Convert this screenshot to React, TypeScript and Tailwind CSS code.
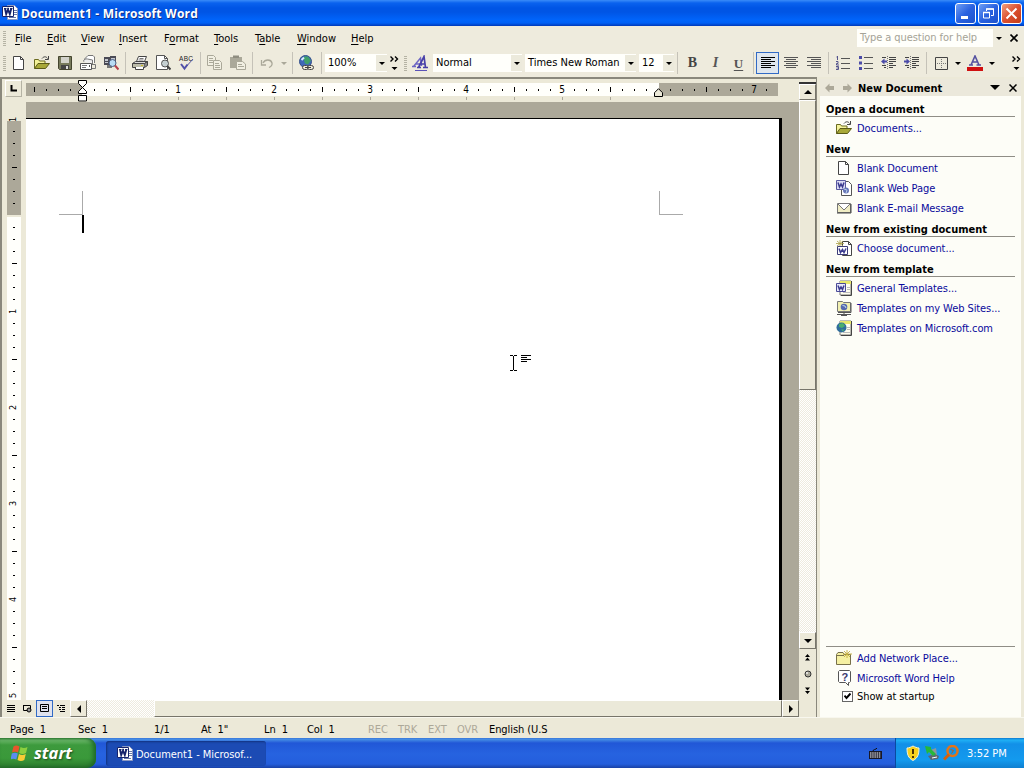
import type { ReactNode } from "react";
import clsx from "clsx";

const UI = "font-['DejaVu_Sans_Condensed','DejaVu_Sans',sans-serif] text-[11px]";

function Svg({ w = 16, h = 16, children }: { w?: number; h?: number; children: ReactNode }) {
  return (
    <svg width={w} height={h} viewBox={`0 0 ${w} ${h}`} fill="none" className="shrink-0">
      {children}
    </svg>
  );
}

function WordIcon() {
  return (
    <Svg>
      <path d="M5.500 .5h7l3 3v11h-10z" fill="#fff" stroke="#8c98c0" />
      <path d="M12 5.500h3M12 7.500h3M12 9.500h3M7 12.500h7" stroke="#6878a8" />
      <path d="M.5 1.500h11v10h-11z" fill="#fff" stroke="#16246c" />
      <path d="M2 3.500h2.500M5.500 3.500H7M8 3.500h2.500" stroke="#16246c" />
      <path d="M3 3.500l1.200 5.500L6 4.500 7.800 9 9.300 3.500" stroke="#16246c" strokeWidth="1.900" />
    </Svg>
  );
}

const NewDoc = () => (
  <Svg>
    <path d="M2.500 1.500h7l3 3v10h-10z" fill="#fff" stroke="#444" />
    <path d="M9.500 1.500v3h3" stroke="#444" />
  </Svg>
);

const OpenFolder = () => (
  <Svg>
    <path d="M.5 13.500v-9h4l1 1.500h5.500v3" fill="#f4f29a" stroke="#6b6b20" />
    <path d="M.5 13.500L4 8.500h11.500l-4 5z" fill="#a8a838" stroke="#5a5a18" />
    <path d="M8 3.500c2-2.500 4.500-2 5.500 0M14.500 1v3.500H11" stroke="#444" />
  </Svg>
);

const Save = () => (
  <Svg>
    <path d="M1.500 1.500h13v13h-12l-1-1z" fill="#777a5c" stroke="#44452f" />
    <path d="M4 2h8v6H4z" fill="#d2d2ca" />
    <path d="M4 10h8v4H4z" fill="#444" />
    <path d="M9 11h2v3H9z" fill="#ddd" />
  </Svg>
);

const Mail = () => (
  <Svg>
    <path d="M4.500 7V4L8 .5h5l1.500 1.500v6" fill="#fff" stroke="#777" />
    <path d="M3.500 6.500c0-2 2-3 4-2.500l5 1v4" fill="#eee" stroke="#777" />
    <path d="M.5 8.500h11v6H.5z" fill="#fff" stroke="#555" />
    <path d="M2 10.500h5M2 12.500h4" stroke="#777" />
    <path d="M9 10h1v2H9z" fill="#555" />
    <path d="M12 9.500h3.500v4H12" stroke="#777" />
  </Svg>
);

const Search = () => (
  <Svg>
    <path d="M1 2h6v8H1zM7 1h6v7H7z" fill="#4b4b55" />
    <path d="M2 4h3v2H2zM8 3h4v4H8zM2 7h3v1H2z" fill="#c4c8d0" />
    <path d="M4 10h5v3H4z" fill="#777" />
    <circle cx="9.500" cy="8" r="3.500" fill="#b9dcf5" stroke="#4a5c80" />
    <path d="M12 10.500l3.500 4" stroke="#b5404a" strokeWidth="2" />
  </Svg>
);

const Print = () => (
  <Svg>
    <path d="M4.500 6.500l2-5h8l-2 5" fill="#fff" stroke="#444" />
    <path d="M7.500 3.500h4M6.500 5h5" stroke="#777" />
    <path d="M.5 8.500l3-2h12l-3 2z" fill="#ddd" stroke="#444" />
    <path d="M.5 8.500h12v4H.5z" fill="#bcbcaa" stroke="#444" />
    <path d="M12.500 8.500l3-2v4l-3 2" fill="#888" stroke="#444" />
    <path d="M3.500 12v2.500h8V12" fill="#fff" stroke="#444" />
    <path d="M9 10.500h2" stroke="#c8b820" />
  </Svg>
);

const Preview = () => (
  <Svg>
    <path d="M1.500 .5h8l3 3v11h-11z" fill="#fff" stroke="#555" />
    <path d="M9.500 .5v3h3" stroke="#555" />
    <circle cx="10" cy="8.500" r="3.500" fill="#c5d0d2" stroke="#555" />
    <path d="M12.200 11l3.300 3.500" stroke="#444" strokeWidth="2" />
  </Svg>
);

const Spell = () => (
  <Svg>
    <text x="1" y="5.500" fontSize="6.500" fontFamily="Liberation Sans" fill="#222" letterSpacing=".3">
      ABC
    </text>
    <path d="M6.500 13.500L15 4" stroke="#5555a0" />
    <path d="M3 9l3.500 4.500 3-4" stroke="#5050a8" strokeWidth="2" />
  </Svg>
);

const Copy = () => (
  <Svg>
    <path d="M.5 .5h6l2 2v8h-8z" stroke="#aaa899" fill="#f1efe2" />
    <path d="M6.500 5.500h6l2 2v7h-8z" stroke="#aaa899" fill="#f1efe2" />
    <path d="M2 3.500h4M2 5.500h4M2 7.500h4M8 8.500h4M8 10.500h5M8 12.500h5" stroke="#aaa899" />
  </Svg>
);

const Paste = () => (
  <Svg>
    <path d="M0 2h12v11H0z" fill="#aaa899" />
    <path d="M3 .5h6v2.500H3z" fill="#8f8d80" />
    <path d="M6.500 6.500h6l3 2.500v5.500h-9z" stroke="#aaa899" fill="#f1efe2" />
    <path d="M8 9.500h4M8 11.500h6" stroke="#aaa899" />
  </Svg>
);

const Undo = () => (
  <Svg>
    <path d="M4 8c2-4 8-4 9 0 .5 2-1 3.500-3 4.500" stroke="#aaa899" strokeWidth="1.300" />
    <path d="M2.500 5v5h4.500" stroke="#aaa899" strokeWidth="1.300" />
  </Svg>
);

const Link = () => (
  <Svg w={17}>
    <circle cx="7.500" cy="6.500" r="6" fill="#3e68b8" stroke="#34508a" />
    <path d="M6 1.500l4 0 3 4-3 4-3-1-1-3z" fill="#3fa06a" />
    <path d="M3.500 5l2.500-2.500" stroke="#d7ecff" strokeWidth="2" />
    <rect x="4.500" y="10.500" width="6" height="4" rx="2" fill="#ece9d8" stroke="#444" />
    <rect x="9.500" y="10.500" width="6" height="4" rx="2" fill="#ece9d8" stroke="#444" />
    <path d="M7 12.500h6" stroke="#444" />
  </Svg>
);

const Styles = () => (
  <Svg>
    <path d="M0 11.500h4M1.500 11.500L8.500 3l1 8M4 9h4.500" stroke="#6d66c4" strokeWidth="1.500" />
    <path d="M5 12.500h4M6.500 12.500L12 1.500l1.500 11M8.500 9H13M11 12.500h5" stroke="#4840a8" strokeWidth="1.700" />
    <path d="M3 15.500h12" stroke="#5a52b8" />
  </Svg>
);

const lineSets = {
  left: "M1 2.500h14M1 4.500h10M1 6.500h14M1 8.500h10M1 10.500h14M1 12.500h10",
  center: "M1 2.500h14M3 4.500h10M1 6.500h14M3 8.500h10M1 10.500h14M3 12.500h10",
  right: "M1 2.500h14M5 4.500h10M1 6.500h14M5 8.500h10M1 10.500h14M5 12.500h10",
};

const Align = ({ kind, color = "#555" }: { kind: keyof typeof lineSets; color?: string }) => (
  <Svg>
    <path d={lineSets[kind]} stroke={color} />
  </Svg>
);

const Numbering = () => (
  <Svg>
    <path d="M2.500 1v4M1.500 2h1M1 6.500h2v2H1.500v1.500H4M1 11.500h2.500v3H1M1.500 13h2" stroke="#55558c" />
    <path d="M6 3.500h9M6 8.500h9M6 13.500h9" stroke="#555" />
  </Svg>
);

const Bullets = () => (
  <Svg>
    <path d="M1 1h3v3H1zM1 6.500h3v3H1zM1 12h3v3H1z" fill="#4b4ba8" />
    <path d="M6 2.500h9M6 8.500h9M6 13.500h9" stroke="#555" />
  </Svg>
);

const Indent = ({ out }: { out?: boolean }) => (
  <Svg>
    <path d="M1 2.500h4M8 2.500h7M8 4.500h7M8 6.500h7M8 8.500h4M1 10.500h4M8 10.500h7M3 12.500h2M8 12.500h4" stroke="#444" />
    <path d="M6.500 1v13" stroke="#777" strokeDasharray="1 1" />
    {out ? (
      <path d="M0 6.500l3.500-3v2H6v2H3.500v2z" fill="#4b4ba8" />
    ) : (
      <path d="M6 6.500l-3.500-3v2H0v2h2.500v2z" fill="#4b4ba8" />
    )}
  </Svg>
);

const Borders = () => (
  <Svg>
    <path d="M2.500 2.500h12v12h-12z" stroke="#444" />
    <path d="M8.500 4v10M4 8.500h10" stroke="#777" strokeDasharray="1 1" />
  </Svg>
);

const FontColor = () => (
  <Svg>
    <path d="M2 10h4M4 10L8 1l4 9M5 7h6M9.500 10H14" stroke="#5552a0" strokeWidth="1.600" />
    <path d="M0 12h16v4H0z" fill="#d01010" />
  </Svg>
);

const WebPage = () => (
  <Svg>
    <path d="M5.500 1.500h7l3 3v11h-10z" fill="#fff" stroke="#555" />
    <path d="M.5.5h9v9h-9z" fill="#dcdcf4" stroke="#5a5aa0" />
    <path d="M2 2.500l1.500 4.500L5 4l1.500 3L8 2.500" stroke="#3c3c90" strokeWidth="1.500" />
    <circle cx="10" cy="10.500" r="3" fill="#6676b8" />
    <path d="M8 9l3 1-1 3" stroke="#b6cde4" />
  </Svg>
);

const Envelope = () => (
  <Svg>
    <path d="M1.500 3.500h13v9h-13z" fill="#f0edc4" stroke="#777" />
    <path d="M2 4l6 6 6-6" fill="#fff" stroke="#777" />
    <path d="M1 13h14V4" stroke="#444" />
  </Svg>
);

const ChooseDoc = () => (
  <Svg>
    <path d="M6.500 1.500h6l3 3v11h-9z" fill="#fff" stroke="#444" />
    <path d="M12.500 1.500v3h3" stroke="#444" />
    <path d="M1.500 6.500h10v8h-10z" fill="#fff" stroke="#3c3c78" />
    <path d="M3 8.500l1.500 4L6.500 9.500 8 12.500 10 8.500" stroke="#3c3c90" strokeWidth="1.500" />
    <path d="M0 3.500h8M4 0v6M1 1l6 5M7 1L1 6" stroke="#a99f44" strokeWidth=".8" />
  </Svg>
);

const Template = ({ globe }: { globe?: boolean }) => (
  <Svg>
    <path d="M4 1h11v14H4z" fill="#fffef0" stroke="#777" />
    <path d="M4 1h11v3H4z" fill="#e8e86c" />
    <path d="M15.500 1v14.500H5" stroke="#444" />
    <path d="M11 7.500h3M11 9.500h3M7 12.500h7" stroke="#bbb" />
    {globe ? (
      <>
        <circle cx="5.500" cy="7.500" r="5" fill="#2f6d9c" />
        <path d="M3 4l4-1 2 3-3 2-3-1zM5 9.500h3l-1 2z" fill="#4cae6c" />
      </>
    ) : (
      <>
        <path d="M.5 3.500h9v8h-9z" fill="#e9e9fa" stroke="#4a4a98" />
        <path d="M2 5.500l1.500 4L5 7l1.500 2.500L8 5.500" stroke="#3c3c90" strokeWidth="1.500" />
      </>
    )}
  </Svg>
);

const WebFolder = () => (
  <Svg>
    <path d="M1.500 1.500h5l1 1h7v9h-13z" fill="#f1f0b0" stroke="#777" />
    <path d="M15 3v9.500H2" stroke="#555" />
    <circle cx="8" cy="7" r="3.300" fill="#5668b0" />
    <path d="M6.500 5.500l2.500.5 1 2" stroke="#c5dfe8" />
    <path d="M8 12v2M1 14.500h14M5 15.500h6" stroke="#555" />
  </Svg>
);

const NetFolder = () => (
  <Svg>
    <path d="M.5 14.500v-10l1.500-2h5l1 2h6.500v10z" fill="#f5f0a2" stroke="#77704a" />
    <path d="M1 5.500h7" stroke="#77704a" />
    <path d="M11 0v8M7 4h9M8 1l6 6M14 1L8 7" stroke="#c4ae3c" strokeWidth=".9" />
  </Svg>
);

const HelpIcon = () => (
  <Svg>
    <path d="M3.500.5h10l1 1v10l-1 1h-1v3l-3-3h-6l-1-1v-10z" fill="#fff" stroke="#555" />
    <text x="5.500" y="10.500" fontSize="11" fontWeight="bold" fontFamily="Liberation Sans" fill="#3a3a70">
      ?
    </text>
  </Svg>
);

/* ---------- small chrome parts ---------- */

function Arrow({ dir = "down", size = 3, color = "#000" }: { dir?: "down" | "up" | "left" | "right"; size?: number; color?: string }) {
  const s = size;
  const d = {
    down: `M0 0h${2 * s}L${s} ${s}z`,
    up: `M0 ${s}h${2 * s}L${s} 0z`,
    left: `M${s} 0v${2 * s}L0 ${s}z`,
    right: `M0 0v${2 * s}L${s} ${s}z`,
  }[dir];
  const flat = dir === "down" || dir === "up";
  return (
    <Svg w={flat ? 2 * s : s} h={flat ? s : 2 * s}>
      <path d={d} fill={color} />
    </Svg>
  );
}

const Sep = ({ wide }: { wide?: boolean }) => (
  <div className={clsx("flex h-[22px] shrink-0 justify-center", wide ? "w-[7px]" : "w-[6px]")}>
    <div className="w-px bg-[#c5c2b8]" />
  </div>
);

const Grip = ({ className }: { className: string }) => (
  <div
    className={clsx(
      "h-[15px] w-[3px] shrink-0 bg-[repeating-linear-gradient(to_bottom,#b5b3a4_0,#b5b3a4_1px,transparent_1px,transparent_2px)]",
      className,
    )}
  />
);

const Tool = ({ children, active }: { children: ReactNode; active?: boolean }) => (
  <button
    className={clsx(
      "flex h-[22px] w-[23px] shrink-0 items-center justify-center",
      active && "border border-[#316ac5] bg-[#dfe6ee]",
    )}
  >
    {children}
  </button>
);

const Drop = ({ color }: { color?: string }) => (
  <div className="flex w-[11px] shrink-0 justify-center">
    <Arrow color={color} />
  </div>
);

function Combo({ value, className }: { value: string; className: string }) {
  return (
    <div className={clsx("flex h-[18px] shrink-0 items-center bg-[#fffffb] pl-[3px]", className)}>
      <span className="flex-1 pb-px whitespace-nowrap">{value}</span>
      <span className="flex h-4 w-[11px] items-center justify-center bg-[#eceadc]">
        <Arrow />
      </span>
    </div>
  );
}

const More = () => (
  <Svg w={9} h={15}>
    <path d="M.5 .5l2.500 2.500-2.500 2.500M5 .5l2.500 2.500L5 5.500" stroke="#000" strokeWidth="1.400" />
    <path d="M1.500 11h6l-3 3z" fill="#000" />
  </Svg>
);

const ScrollBtn = ({ dir, className }: { dir: "up" | "down" | "left" | "right"; className: string }) => (
  <button
    className={clsx(
      "flex shrink-0 items-center justify-center border border-t-white border-l-white border-r-[#77756a] border-b-[#77756a] bg-[#ece9d8]",
      className,
    )}
  >
    <Arrow dir={dir} size={4} />
  </button>
);

/* ---------- bars ---------- */

function TitleBar() {
  return (
    <div className="flex h-[26px] items-center bg-[linear-gradient(#3a8cf8_0,#0a62ee_3px,#0055e5_8px,#0055e5_12px,#0064fb_20px,#0060f4_23px,#0038b8_26px)] pr-[2px] pl-[2px]">
      <WordIcon />
      <span className="ml-[3px] flex-1 pt-px font-['Open_Sans',sans-serif] text-[12px] font-bold tracking-[0.2px] text-white [text-shadow:1px_1px_#10308a]">
        Document1 - Microsoft Word
      </span>
      <div className="flex gap-[2px]">
        <button className="flex h-[21px] w-[21px] items-center justify-center rounded-[3px] border border-white bg-[linear-gradient(135deg,#6f9ff5,#2a62e0_50%,#1c52cc)]">
          <Svg w={13} h={13}>
            <path d="M2 9h7v3H2z" fill="#fff" />
          </Svg>
        </button>
        <button className="flex h-[21px] w-[21px] items-center justify-center rounded-[3px] border border-white bg-[linear-gradient(135deg,#6f9ff5,#2a62e0_50%,#1c52cc)]">
          <Svg w={13} h={13}>
            <path d="M4.500 4V2h7v6.500H9" stroke="#fff" />
            <path d="M4 2h8" stroke="#fff" strokeWidth="1.500" />
            <path d="M1.500 5.500h6v5.500h-6z" stroke="#fff" />
            <path d="M1 5.500h7" stroke="#fff" strokeWidth="1.500" />
          </Svg>
        </button>
        <button className="flex h-[21px] w-[21px] items-center justify-center rounded-[3px] border border-white bg-[linear-gradient(135deg,#f0a080,#dc5030_50%,#c23c18)]">
          <Svg w={13} h={13}>
            <path d="M1.500 1.500l10 10M11.500 1.500l-10 10" stroke="#fff" strokeWidth="2" />
          </Svg>
        </button>
      </div>
    </div>
  );
}

const MENUS = [
  { label: "File", w: "w-[32px]" },
  { label: "Edit", w: "w-[34px]" },
  { label: "View", w: "w-[38px]" },
  { label: "Insert", w: "w-[45px]" },
  { label: "Format", w: "w-[50px]", key: 1 },
  { label: "Tools", w: "w-[41px]" },
  { label: "Table", w: "w-[42px]", key: 1 },
  { label: "Window", w: "w-[54px]" },
  { label: "Help", w: "w-[30px]" },
];

function MenuBar() {
  return (
    <div className="flex h-[24px] items-center bg-[#eeebdd]">
      <Grip className="mr-[9px] ml-[3px]" />
      {MENUS.map(({ label, w, key = 0 }) => (
        <span key={label} className={w}>
          {label.slice(0, key)}
          <u className="underline-offset-2">{label[key]}</u>
          {label.slice(key + 1)}
        </span>
      ))}
      <div className="ml-auto flex h-[18px] w-[147px] items-center bg-[#fffffb] pl-[3px] text-[#a5a396]">
        <span className="flex-1 pb-px tracking-[-0.08px] whitespace-nowrap">Type a question for help</span>
        <span className="flex h-[18px] w-[11px] items-center justify-center bg-[#eeebdd]">
          <Arrow />
        </span>
      </div>
      <div className="flex w-5 justify-center">
        <Svg w={8} h={8}>
          <path d="M.5.5l7 7M7.500.5l-7 7" stroke="#000" strokeWidth="1.600" />
        </Svg>
      </div>
    </div>
  );
}

function Toolbar() {
  return (
    <div className="flex h-[27px] items-center bg-[#eeebdd] pb-px">
      <Grip className="mr-px ml-[3px]" />
      <Tool><NewDoc /></Tool>
      <Tool><OpenFolder /></Tool>
      <Tool><Save /></Tool>
      <Tool><Mail /></Tool>
      <Tool><Search /></Tool>
      <Sep />
      <Tool><Print /></Tool>
      <Tool><Preview /></Tool>
      <Tool><Spell /></Tool>
      <Sep />
      <Tool><Copy /></Tool>
      <Tool><Paste /></Tool>
      <Sep />
      <Tool><Undo /></Tool>
      <Drop color="#aaa899" />
      <Sep />
      <Tool><Link /></Tool>
      <Sep wide />
      <Combo value="100%" className="w-[62px]" />
      <div className="flex w-[15px] shrink-0 justify-center"><More /></div>
      <Grip className="mr-px ml-[2px]" />
      <Tool><Styles /></Tool>
      <Combo value="Normal" className="ml-[2px] w-[89px]" />
      <Combo value="Times New Roman" className="ml-[3px] w-[111px]" />
      <Combo value="12" className="ml-[3px] w-[35px]" />
      <Sep wide />
      <Tool>
        <span className="font-['Liberation_Serif',serif] text-[14px] font-bold text-[#444]">B</span>
      </Tool>
      <Tool>
        <span className="font-['Liberation_Serif',serif] text-[14px] font-bold text-[#555] italic">I</span>
      </Tool>
      <Tool>
        <span className="font-['Liberation_Serif',serif] text-[13px] font-bold text-[#555] underline underline-offset-2">U</span>
      </Tool>
      <Sep />
      <Tool active><Align kind="left" color="#000" /></Tool>
      <Tool><Align kind="center" /></Tool>
      <Tool><Align kind="right" /></Tool>
      <Sep />
      <Tool><Numbering /></Tool>
      <Tool><Bullets /></Tool>
      <Tool><Indent out /></Tool>
      <Tool><Indent /></Tool>
      <Sep />
      <Tool><Borders /></Tool>
      <Drop />
      <Tool><FontColor /></Tool>
      <Drop />
      <div className="mr-[3px] ml-auto"><More /></div>
    </div>
  );
}

/* ---------- document window ---------- */

// one cell per eighth of an inch, 12px each; zero is the page margin
const H_CELLS = Array.from({ length: 62 }, (_, i) => i - 4);
const V_CELLS = Array.from({ length: 49 }, (_, i) => i - 8);

function HRuler() {
  return (
    <div className="relative flex h-[23px] shrink-0">
      <div className="mt-px ml-[3px] flex h-[17px] w-[17px] items-center justify-center border border-[#b5b3a4] border-t-white border-l-white">
        <Svg w={7} h={7}>
          <path d="M1.500 0v5.500H7" stroke="#000" strokeWidth="2" />
        </Svg>
      </div>
      <div className="ml-1 w-[752px] pt-1">
        <div className="flex h-[13px] items-center bg-[linear-gradient(to_right,#aca899_56px,#fffffb_56px,#fffffb_633px,#aca899_633px)] pl-[2px] text-[10px]">
          {H_CELLS.map((n) => (
            <div key={n} className="flex w-3 shrink-0 items-center justify-center">
              {n === 0 || n === 48 ? null : n % 8 === 0 ? (
                n / 8
              ) : (
                <div className={clsx("w-px bg-black", n % 4 === 0 ? "h-[5px]" : "h-[2px]")} />
              )}
            </div>
          ))}
        </div>
        <div className="flex h-[4px] pl-[2px]">
          {H_CELLS.map((n) => (
            <div key={n} className="flex w-3 shrink-0 justify-center pt-px">
              {n > 0 && n < 48 && n % 4 === 0 && <div className="h-[3px] w-px bg-[#aca899]" />}
            </div>
          ))}
        </div>
      </div>
      <div className="absolute top-[1px] left-[76px]">
        <Svg w={10} h={22}>
          <path d="M.5.5h8v3l-4 4-4-4zM4.500 7.500l4 4v2h-8v-2zM.5 15.500h8v5.500h-8z" fill="#fffffb" stroke="#000" />
        </Svg>
      </div>
      <div className="absolute top-[9px] left-[652px]">
        <Svg w={10} h={9}>
          <path d="M4.500.7l4 4v3.800h-8V4.700z" fill="#ece9d8" stroke="#000" />
        </Svg>
      </div>
    </div>
  );
}

function VRuler() {
  return (
    <div className="flex w-[24px] shrink-0 pl-[5px]">
      <div className="flex w-[14px] flex-col overflow-hidden bg-[linear-gradient(#ece9d8_19px,#aca899_19px,#aca899_113px,#ece9d8_113px,#ece9d8_115px,#fffffb_115px)] pt-[11px] text-[9px]">
        {V_CELLS.map((n) => (
          <div key={n} className="flex h-3 shrink-0 items-center justify-center">
            {n === 0 ? null : n % 8 === 0 ? (
              <span className="-rotate-90 leading-none">{Math.abs(n / 8)}</span>
            ) : (
              <div className={clsx("h-px bg-black", n % 4 === 0 ? "w-[5px]" : "w-[2px]")} />
            )}
          </div>
        ))}
      </div>
    </div>
  );
}

function Page() {
  return (
    <div className="flex-1 overflow-hidden bg-[#aca899] pt-[16px] pr-[17px]">
      <div className="relative h-full border-t border-r-[3px] border-black bg-white">
        <div className="absolute top-[72px] left-[33px] h-6 w-6 border-r border-b border-[#aaa]" />
        <div className="absolute top-[72px] left-[633px] h-6 w-6 border-b border-l border-[#aaa]" />
        <div className="absolute top-[96px] left-[56px] h-[18px] w-[2px] bg-black" />
        <div className="absolute top-[236px] left-[484px]">
          <Svg w={24} h={18}>
            <path d="M0 .5h3M4 .5h3M0 15.500h3M4 15.500h3M3.500 1v14M11 .5h10M11 2.500h6M11 4.500h10M11 6.500h6" stroke="#000" />
          </Svg>
        </div>
      </div>
    </div>
  );
}

const TRACK = "bg-[repeating-conic-gradient(#ffffff_0_25%,#eeebdf_0_50%)] bg-[length:2px_2px]";

function VScroll() {
  return (
    <div className="flex w-[17px] shrink-0 flex-col items-center bg-[#ece9d8]">
      <div className="mt-[2px] h-[3px] w-full border-b-2 border-[#333]" />
      <ScrollBtn dir="up" className="h-[16px] w-[17px]" />
      <div className="h-[290px] w-full border border-t-white border-l-white border-r-[#77756a] border-b-[#77756a] bg-[#ece9d8]" />
      <div className={clsx("w-full flex-1", TRACK)} />
      <ScrollBtn dir="down" className="h-[17px] w-[17px]" />
      <div className="flex h-[68px] flex-col items-center gap-[9px] pt-[5px]">
        <Svg w={7} h={7}>
          <path d="M1 3h5L3.500 0zM1 6.500h5L3.500 3.500z" fill="#000" />
        </Svg>
        <Svg w={8} h={8}>
          <circle cx="4" cy="4" r="3" fill="#aaa899" stroke="#333" />
          <circle cx="3" cy="3" r="1" fill="#eee" />
        </Svg>
        <Svg w={7} h={7}>
          <path d="M1 .5h5L3.500 3.500zM1 4h5L3.500 7z" fill="#000" />
        </Svg>
      </div>
    </div>
  );
}

function HScroll() {
  return (
    <div className="flex h-[17px] shrink-0 items-center bg-[#ece9d8]">
      <div className="flex w-[17px] justify-center">
        <Svg w={8} h={8}>
          <path d="M0 .5h8M0 2.500h8M0 4.500h8M0 6.500h8" stroke="#000" />
        </Svg>
      </div>
      <div className="flex w-[17px] justify-center">
        <Svg w={9} h={9}>
          <path d="M.5 1.500h7v4M.5 1v5.500h4" stroke="#000" />
          <circle cx="6" cy="6" r="2" fill="#999" stroke="#000" />
        </Svg>
      </div>
      <div className="flex h-[17px] w-[17px] items-center justify-center border border-[#316ac5] bg-[#dfe2ee]">
        <Svg w={9} h={9}>
          <path d="M.5.5h8v7h-8zM2 2.500h5M2 4.500h5" stroke="#000" />
        </Svg>
      </div>
      <div className="flex w-[17px] justify-center">
        <Svg w={9} h={8}>
          <path d="M0 .5h2M3 .5h5M2 2.500h2M5 2.500h3M2 4.500h2M5 4.500h3M3 6.500h5" stroke="#000" />
        </Svg>
      </div>
      <ScrollBtn dir="left" className="h-[17px] w-[17px]" />
      <div className={clsx("h-full w-[67px]", TRACK)} />
      <div className="h-full flex-1 border border-t-white border-l-white border-r-[#77756a] border-b-[#77756a] bg-[#ebe9d9]" />
      <ScrollBtn dir="right" className="h-[17px] w-[17px]" />
    </div>
  );
}

function DocWindow() {
  return (
    <div className="flex w-[817px] border-t-2 border-r border-l-2 border-[#8a887c] bg-[#ece9d8]">
      <div className="flex min-w-0 flex-1 flex-col">
        <HRuler />
        <div className="flex min-h-0 flex-1">
          <VRuler />
          <Page />
        </div>
        <HScroll />
      </div>
      <VScroll />
    </div>
  );
}

/* ---------- task pane ---------- */

function Heading({ children }: { children: ReactNode }) {
  return (
    <div className="h-5 pt-1">
      <h3 className="h-[15px] border-b border-[#8f8d86] font-bold leading-[16px]">{children}</h3>
    </div>
  );
}

function Item({ icon, children }: { icon: ReactNode; children: ReactNode }) {
  return (
    <div className="flex h-5 items-center gap-[5px] pl-[10px] text-[#0a0a9c]">
      {icon}
      <span className="tracking-[-0.08px] whitespace-nowrap">{children}</span>
    </div>
  );
}

const PaneArrow = ({ flip }: { flip?: boolean }) => (
  <Svg w={11} h={10}>
    <path d={flip ? "M10 5L5.500 .5V3H1v4h4.500v2.500z" : "M1 5L5.500 .5V3H10v4H5.500v2.500z"} fill="#aca899" />
  </Svg>
);

function TaskPane() {
  return (
    <div className="mt-[2px] ml-[3px] flex w-[201px] flex-col bg-[#fdfdf7]">
      <div className="flex h-[17px] items-center bg-[#ebe8db] pr-[4px] pl-1">
        <PaneArrow />
        <div className="w-[7px]" />
        <PaneArrow flip />
        <span className="ml-[5px] flex-1 pt-px font-bold">New Document</span>
        <Arrow size={5} />
        <div className="w-[9px]" />
        <Svg w={8} h={8}>
          <path d="M.5.5l7 7M7.500.5l-7 7" stroke="#000" strokeWidth="1.500" />
        </Svg>
      </div>
      <div className="flex flex-1 flex-col pt-[2px] pr-[6px] pl-[6px]">
        <Heading>Open a document</Heading>
        <Item icon={<OpenFolder />}>Documents...</Item>
        <Heading>New</Heading>
        <Item icon={<NewDoc />}>Blank Document</Item>
        <Item icon={<WebPage />}>Blank Web Page</Item>
        <Item icon={<Envelope />}>Blank E-mail Message</Item>
        <Heading>New from existing document</Heading>
        <Item icon={<ChooseDoc />}>Choose document...</Item>
        <Heading>New from template</Heading>
        <Item icon={<Template />}>General Templates...</Item>
        <Item icon={<WebFolder />}>Templates on my Web Sites...</Item>
        <Item icon={<Template globe />}>Templates on Microsoft.com</Item>
        <div className="mt-auto h-[71px] border-t border-[#8f8d86] pt-px">
          <Item icon={<NetFolder />}>Add Network Place...</Item>
          <Item icon={<HelpIcon />}>Microsoft Word Help</Item>
          <label className="flex h-4 items-center gap-1 pl-4 tracking-[-0.08px]">
            <span className="flex h-[11px] w-[11px] items-center justify-center border border-[#666] bg-white">
              <Svg w={7} h={7}>
                <path d="M.5 2.500l2 2.500 4-4.500" stroke="#000" strokeWidth="2" />
              </Svg>
            </span>
            Show at startup
          </label>
        </div>
      </div>
    </div>
  );
}

/* ---------- status bar + taskbar ---------- */

function StatusBar() {
  return (
    <div className="flex h-[20px] items-center bg-[#ece9d8] pt-[2px] pl-[10px] tracking-[-0.08px] whitespace-pre">
      <span className="w-[68px]">Page  1</span>
      <span className="w-[76px]">Sec  1</span>
      <span className="w-[47px]">1/1</span>
      <span className="w-[63px]">At  1"</span>
      <span className="w-[43px]">Ln  1</span>
      <span className="w-[61px]">Col  1</span>
      <span className="w-[30px] text-[#aca899]">REC</span>
      <span className="w-[30px] text-[#aca899]">TRK</span>
      <span className="w-[29px] text-[#aca899]">EXT</span>
      <span className="w-[32px] text-[#aca899]">OVR</span>
      <span>English (U.S</span>
    </div>
  );
}

function Taskbar() {
  return (
    <div className="flex h-[30px] items-stretch bg-[linear-gradient(#3168d5_0,#4993e6_1px,#2157d7_5px,#2663e0_16px,#245edc_26px,#1941a5_30px)] text-white">
      <button className="flex w-[96px] items-center gap-[5px] rounded-r-[9px] bg-[linear-gradient(#3c873c_0,#6cb86a_2px,#3d9a3d_7px,#3a993a_20px,#2f8230_27px,#256c28_30px)] pl-[11px] shadow-[inset_-3px_0_4px_#1f6a28]">
        <Svg w={18} h={18}>
          <path d="M2.500 2.500Q5 .5 8.500 2.500L7 8.500Q4 7 1 8.500z" fill="#e8562c" />
          <path d="M9.500 3Q13 5 16.500 3L15 9Q11.500 11 8.200 9z" fill="#8ccf3f" />
          <path d="M.8 9.500Q4 8 6.800 9.500L5.300 15.500Q2 14-.5 15.500z" fill="#5a8df0" />
          <path d="M8 10Q11 12 14.800 10L13.300 16Q10 18 6.500 16z" fill="#f8cc36" />
        </Svg>
        <span className="font-['Open_Sans',sans-serif] text-[16.500px] leading-none font-bold italic [text-shadow:1px_1px_2px_#1c4a1c]">start</span>
      </button>
      <div className="mt-[3px] ml-[10px] flex h-[25px] w-[160px] items-center gap-[3px] rounded-[3px] bg-[#1c4bb4] pl-[11px] shadow-[inset_1px_1px_2px_#12337e]">
        <WordIcon />
        <span className="pt-px tracking-[-0.05px]">Document1 - Microsof...</span>
      </div>
      <div className="ml-auto flex w-[26px] items-center pt-[2px]">
        <Svg w={13} h={12}>
          <path d="M4 3c0-2 3-1 4-3" stroke="#111" />
          <path d="M0 3h13v8H0z" fill="#181828" />
          <path d="M1 5h11M1 7h11M1 9h11" stroke="#fff" strokeDasharray="1.500 .7" />
        </Svg>
      </div>
      <div className="flex w-[129px] items-center gap-[3px] border-l border-[#0a4aa0] bg-[linear-gradient(#0d78cf_0,#1fb0f5_2px,#1290e8_6px,#139aee_22px,#0f7fd0_30px)] pl-[9px]">
        <Svg>
          <path d="M8 1c2 1 4 2 6 2 0 6-1 10-6 12.500C3 13 2 9 2 3c2 0 4-1 6-2z" fill="#f7d11c" stroke="#f5f2d8" />
          <path d="M8 4v5M8 11v2" stroke="#4a3200" strokeWidth="2" />
        </Svg>
        <Svg>
          <path d="M4 6l8-3 1 7-4 2z" fill="#8c979c" />
          <path d="M4 11l7-2 4 2-1 3-7 1z" fill="#5c6870" />
          <path d="M1 1l6 1 0 2 5 5-3 2-4-4-2 2z" fill="#25b83a" />
          <path d="M8 13l5-1" stroke="#fff" />
        </Svg>
        <Svg>
          <circle cx="9.500" cy="6" r="5" stroke="#e27418" strokeWidth="2.500" />
          <path d="M6 9.500l-5 5" stroke="#d2610e" strokeWidth="3" />
          <path d="M7.500 4.500l3 1-2 3" stroke="#b95d1c" />
        </Svg>
        <span className="ml-[5px]">3:52 PM</span>
      </div>
    </div>
  );
}

export default function App() {
  return (
    <div className={clsx("flex h-[768px] w-[1024px] flex-col overflow-hidden bg-[#ece9d8] leading-none text-black", UI)}>
      <TitleBar />
      <MenuBar />
      <Toolbar />
      <div className="flex min-h-0 flex-1">
        <DocWindow />
        <TaskPane />
      </div>
      <div className="h-px bg-[#f8f7ee]" />
      <StatusBar />
      <Taskbar />
    </div>
  );
}
